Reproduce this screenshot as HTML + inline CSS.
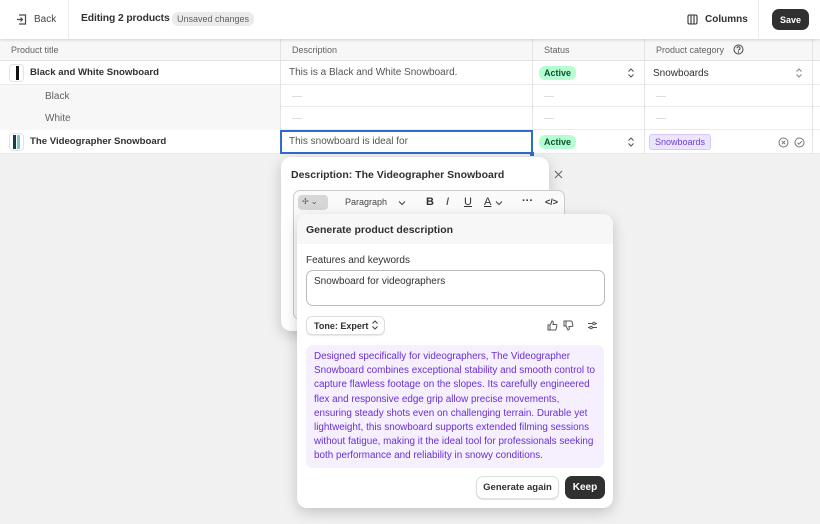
<!DOCTYPE html>
<html><head><style>
*{box-sizing:border-box;margin:0;padding:0}
body{width:820px;height:524px;overflow:hidden;background:#f1f1f1;font-family:"Liberation Sans",sans-serif;color:#303030;position:relative;font-size:10px}
.abs{position:absolute;white-space:nowrap}
.top{left:0;top:0;width:820px;height:39px;background:#fff;box-shadow:0 1px 3px rgba(0,0,0,.15);z-index:2}
.hdr{left:0;top:39px;width:820px;height:22px;background:#f7f7f7;border-bottom:1px solid #e3e3e3;color:#616161;font-size:9px}
.row{left:0;width:820px;background:#fff;border-bottom:1px solid #ebebeb}
.vl{position:absolute;top:39px;height:115px;width:1px;background:#e3e3e3}
.badge{background:#b4fed2;color:#0c5132;font-weight:bold;font-size:9px;border-radius:6px;padding:2px 5px}
.dash{width:10px;height:1px;background:#ddd}
.pop{background:#fff;border-radius:10px;box-shadow:0 4px 14px rgba(0,0,0,.2)}
.btn{border-radius:7px;font-weight:bold;font-size:10px;display:flex;align-items:center;justify-content:center}
</style></head><body>
<div class="abs top">
  <svg class="abs" style="left:16px;top:14px" width="11" height="11" viewBox="0 0 11 11" fill="none" stroke="#4a4a4a" stroke-width="1.2"><path d="M3 1h6.5v9H3M1 5.5h5M4.5 3.5l2 2-2 2"/></svg>
  <div class="abs" style="left:34px;top:14px;font-size:10px;color:#444">Back</div>
  <div class="abs" style="left:68px;top:0;width:1px;height:39px;background:#ebebeb"></div>
  <div class="abs" style="left:81px;top:13px;font-size:10.3px;font-weight:bold;letter-spacing:-0.1px">Editing 2 products</div>
  <div class="abs" style="left:172px;top:12px;background:#ebebeb;color:#616161;font-size:9px;padding:2px 5px;border-radius:6px">Unsaved changes</div>
  <svg class="abs" style="left:687px;top:14px" width="11" height="11" viewBox="0 0 11 11" fill="none" stroke="#333" stroke-width="1.1"><rect x="1" y="1" width="9" height="9" rx="1.5"/><path d="M4 1v9M7 1v9"/></svg>
  <div class="abs" style="left:705px;top:14px;font-weight:bold;font-size:10px">Columns</div>
  <div class="abs" style="left:758px;top:0;width:1px;height:39px;background:#ebebeb"></div>
  <div class="abs btn" style="left:772px;top:9px;width:37px;height:21px;background:#303030;color:#fff;font-size:9px">Save</div>
</div>
<div class="abs hdr">
  <span class="abs" style="left:11px;top:6px">Product title</span>
  <span class="abs" style="left:292px;top:6px">Description</span>
  <span class="abs" style="left:544px;top:6px">Status</span>
  <span class="abs" style="left:656px;top:6px">Product category</span>
  <svg class="abs" style="left:733px;top:5px" width="11" height="11" viewBox="0 0 11 11" fill="none" stroke="#444" stroke-width="1"><circle cx="5.5" cy="5.5" r="4.5"/><path d="M4 4.3a1.5 1.5 0 1 1 2 1.4c-.4.2-.5.5-.5.9"/><circle cx="5.5" cy="8" r=".3"/></svg>
</div>
<div class="abs row" style="top:61px;height:24px"></div>
<div class="abs row" style="top:85px;height:22px"></div>
<div class="abs row" style="top:107px;height:23px"></div>
<div class="abs row" style="top:130px;height:24px"></div>
<div class="abs" style="left:0;top:85px;width:280px;height:45px;background:#f7f7f7"></div>
<div class="vl" style="left:280px"></div><div class="vl" style="left:532px"></div><div class="vl" style="left:644px"></div><div class="vl" style="left:812px"></div>
<div class="abs" style="left:9px;top:64px;width:15px;height:18px;border:1px solid #e3e3e3;border-radius:4px;background:#fff"><div style="position:absolute;left:6px;top:1px;width:3px;height:14px;background:#111"></div></div>
<div class="abs" style="left:30px;top:67px;font-size:9.6px;font-weight:bold;color:#303030">Black and White Snowboard</div>
<div class="abs" style="left:289px;top:67px;font-size:10px;color:#555">This is a Black and White Snowboard.</div>
<div class="abs badge" style="left:539px;top:66px">Active</div>
<svg class="abs" style="left:627px;top:68px" width="8" height="10" viewBox="0 0 8 10" fill="none" stroke="#555" stroke-width="1.1"><path d="M1.5 3.5L4 1l2.5 2.5M1.5 6.5L4 9l2.5-2.5"/></svg>
<div class="abs" style="left:653px;top:68px;font-size:10px;color:#303030">Snowboards</div>
<svg class="abs" style="left:795px;top:68px" width="8" height="10" viewBox="0 0 8 10" fill="none" stroke="#888" stroke-width="1.1"><path d="M1.5 3.5L4 1l2.5 2.5M1.5 6.5L4 9l2.5-2.5"/></svg>
<div class="abs" style="left:45px;top:91px;font-size:10px;color:#616161">Black</div>
<div class="abs" style="left:45px;top:113px;font-size:10px;color:#616161">White</div>
<div class="abs dash" style="left:292px;top:96px"></div><div class="abs dash" style="left:544px;top:96px"></div><div class="abs dash" style="left:656px;top:96px"></div>
<div class="abs dash" style="left:292px;top:118px"></div><div class="abs dash" style="left:544px;top:118px"></div><div class="abs dash" style="left:656px;top:118px"></div>
<div class="abs" style="left:9px;top:133px;width:15px;height:18px;border:1px solid #e3e3e3;border-radius:4px;background:#fff"><div style="position:absolute;left:3px;top:1px;width:3px;height:14px;background:#1a3a44"></div><div style="position:absolute;left:7px;top:1px;width:3px;height:14px;background:#7cc6c6"></div></div>
<div class="abs" style="left:30px;top:136px;font-size:9.6px;font-weight:bold">The Videographer Snowboard</div>
<div class="abs" style="left:280px;top:130px;width:253px;height:24px;border:2px solid #2c6ecb;background:#fff"></div>
<div class="abs" style="left:530px;top:152px;width:4px;height:4px;background:#2c6ecb"></div>
<div class="abs" style="left:289px;top:136px;font-size:10px;color:#555">This snowboard is ideal for</div>
<div class="abs badge" style="left:539px;top:135px">Active</div>
<svg class="abs" style="left:627px;top:137px" width="8" height="10" viewBox="0 0 8 10" fill="none" stroke="#555" stroke-width="1.1"><path d="M1.5 3.5L4 1l2.5 2.5M1.5 6.5L4 9l2.5-2.5"/></svg>
<div class="abs" style="left:649px;top:134px;background:#ece5fe;border:1px solid #d8c9fc;color:#6b3fd4;font-size:9px;padding:2px 5px;border-radius:3px">Snowboards</div>
<svg class="abs" style="left:778px;top:137px" width="11" height="11" viewBox="0 0 11 11" fill="none" stroke="#777" stroke-width="1"><circle cx="5.5" cy="5.5" r="4.5"/><path d="M3.8 3.8l3.4 3.4M7.2 3.8l-3.4 3.4"/></svg>
<svg class="abs" style="left:794px;top:137px" width="11" height="11" viewBox="0 0 11 11" fill="none" stroke="#777" stroke-width="1"><circle cx="5.5" cy="5.5" r="4.5"/><path d="M3.5 5.7l1.5 1.5 3-3"/></svg>
<div class="abs pop" style="left:281px;top:157px;width:268px;height:174px">
  <div class="abs" style="left:10px;top:12px;font-size:10.5px;font-weight:bold">Description: The Videographer Snowboard</div>
  <svg class="abs" style="left:273px;top:13px" width="9" height="9" viewBox="0 0 9 9" stroke="#666" stroke-width="1.1"><path d="M1 1l7 7M8 1l-7 7"/></svg>
  <div class="abs" style="left:12px;top:33px;width:272px;height:130px;border:1px solid #ccc;border-radius:7px;background:#fafafa"></div>
  <div class="abs" style="left:17px;top:38px;width:30px;height:15px;background:#d6d6d6;border-radius:4px;font-size:8px;color:#555;padding:2px 4px">✢ ⌄</div>
  <div class="abs" style="left:64px;top:40px;font-size:9px;color:#444">Paragraph</div>
  <svg class="abs" style="left:117px;top:43px" width="8" height="6" viewBox="0 0 8 6" fill="none" stroke="#444" stroke-width="1.1"><path d="M1 1.5l3 3 3-3"/></svg>
  <div class="abs" style="left:145px;top:39px;font-size:11px;font-weight:bold">B</div>
  <div class="abs" style="left:165px;top:39px;font-size:11px;font-style:italic">I</div>
  <div class="abs" style="left:183px;top:39px;font-size:11px;text-decoration:underline">U</div>
  <div class="abs" style="left:203px;top:39px;font-size:11px;text-decoration:underline">A</div>
  <svg class="abs" style="left:214px;top:43px" width="8" height="6" viewBox="0 0 8 6" fill="none" stroke="#444" stroke-width="1.1"><path d="M1 1.5l3 3 3-3"/></svg>
  <div class="abs" style="left:241px;top:38px;font-size:11px;font-weight:bold">···</div>
  <div class="abs" style="left:264px;top:40px;font-size:9px;font-weight:bold">&lt;/&gt;</div>
</div>
<div class="abs pop" style="left:297px;top:214px;width:316px;height:294px;overflow:hidden">
  <div class="abs" style="left:0;top:0;width:316px;height:30px;background:#f7f7f7"></div>
  <div class="abs" style="left:9px;top:10px;font-size:10.5px;font-weight:bold">Generate product description</div>
  <div class="abs" style="left:9px;top:41px;font-size:10px">Features and keywords</div>
  <div class="abs" style="left:9px;top:56px;width:299px;height:36px;border:1px solid #bbb;border-radius:7px"></div>
  <div class="abs" style="left:17px;top:62px;font-size:10px">Snowboard for videographers</div>
  <div class="abs" style="left:9px;top:102px;width:79px;height:19px;border:1px solid #ddd;border-radius:6px;box-shadow:0 1px 1px rgba(0,0,0,.1);font-size:9px;font-weight:bold;padding:4px 7px">Tone: Expert</div>
  <svg class="abs" style="left:74px;top:106px" width="8" height="10" viewBox="0 0 8 10" fill="none" stroke="#444" stroke-width="1.1"><path d="M1.5 3.5L4 1l2.5 2.5M1.5 6.5L4 9l2.5-2.5"/></svg>
  <svg class="abs" style="left:250px;top:106px" width="11" height="11" viewBox="0 0 11 11" fill="none" stroke="#555" stroke-width="1"><path d="M1 5h2v5H1zM3 5l2-4c1 0 1.5.6 1.2 2L6 4.5h3c.6 0 1 .5.9 1l-.8 3.5c-.1.6-.6 1-1.2 1H3"/></svg>
  <svg class="abs" style="left:266px;top:106px" width="11" height="11" viewBox="0 0 11 11" fill="none" stroke="#555" stroke-width="1"><path d="M1 6h2V1H1zM3 6l2 4c1 0 1.5-.6 1.2-2L6 6.5h3c.6 0 1-.5.9-1L9.1 2c-.1-.6-.6-1-1.2-1H3"/></svg>
  <svg class="abs" style="left:290px;top:106px" width="11" height="11" viewBox="0 0 11 11" fill="none" stroke="#555" stroke-width="1"><path d="M1 3.5h9M1 7.5h9"/><circle cx="7" cy="3.5" r="1.3" fill="#fff"/><circle cx="4" cy="7.5" r="1.3" fill="#fff"/></svg>
  <div class="abs" style="left:9px;top:131px;width:298px;height:123px;background:#f6f0fe;border-radius:7px"></div>
  <div class="abs" style="left:17px;top:136px;font-size:9.9px;line-height:14.2px;color:#6a2fd6">Designed specifically for videographers, The Videographer<br>Snowboard combines exceptional stability and smooth control to<br>capture flawless footage on the slopes. Its carefully engineered<br>flex and responsive edge grip allow precise movements,<br>ensuring steady shots even on challenging terrain. Durable yet<br>lightweight, this snowboard supports extended filming sessions<br>without fatigue, making it the ideal tool for professionals seeking<br>both performance and reliability in snowy conditions.</div>
  <div class="abs btn" style="left:179px;top:262px;width:83px;height:23px;border:1px solid #ddd;box-shadow:0 1px 1px rgba(0,0,0,.12);background:#fff;font-size:9.5px;color:#303030">Generate again</div>
  <div class="abs btn" style="left:268px;top:262px;width:40px;height:23px;background:#303030;color:#fff">Keep</div>
</div>
</body></html>
